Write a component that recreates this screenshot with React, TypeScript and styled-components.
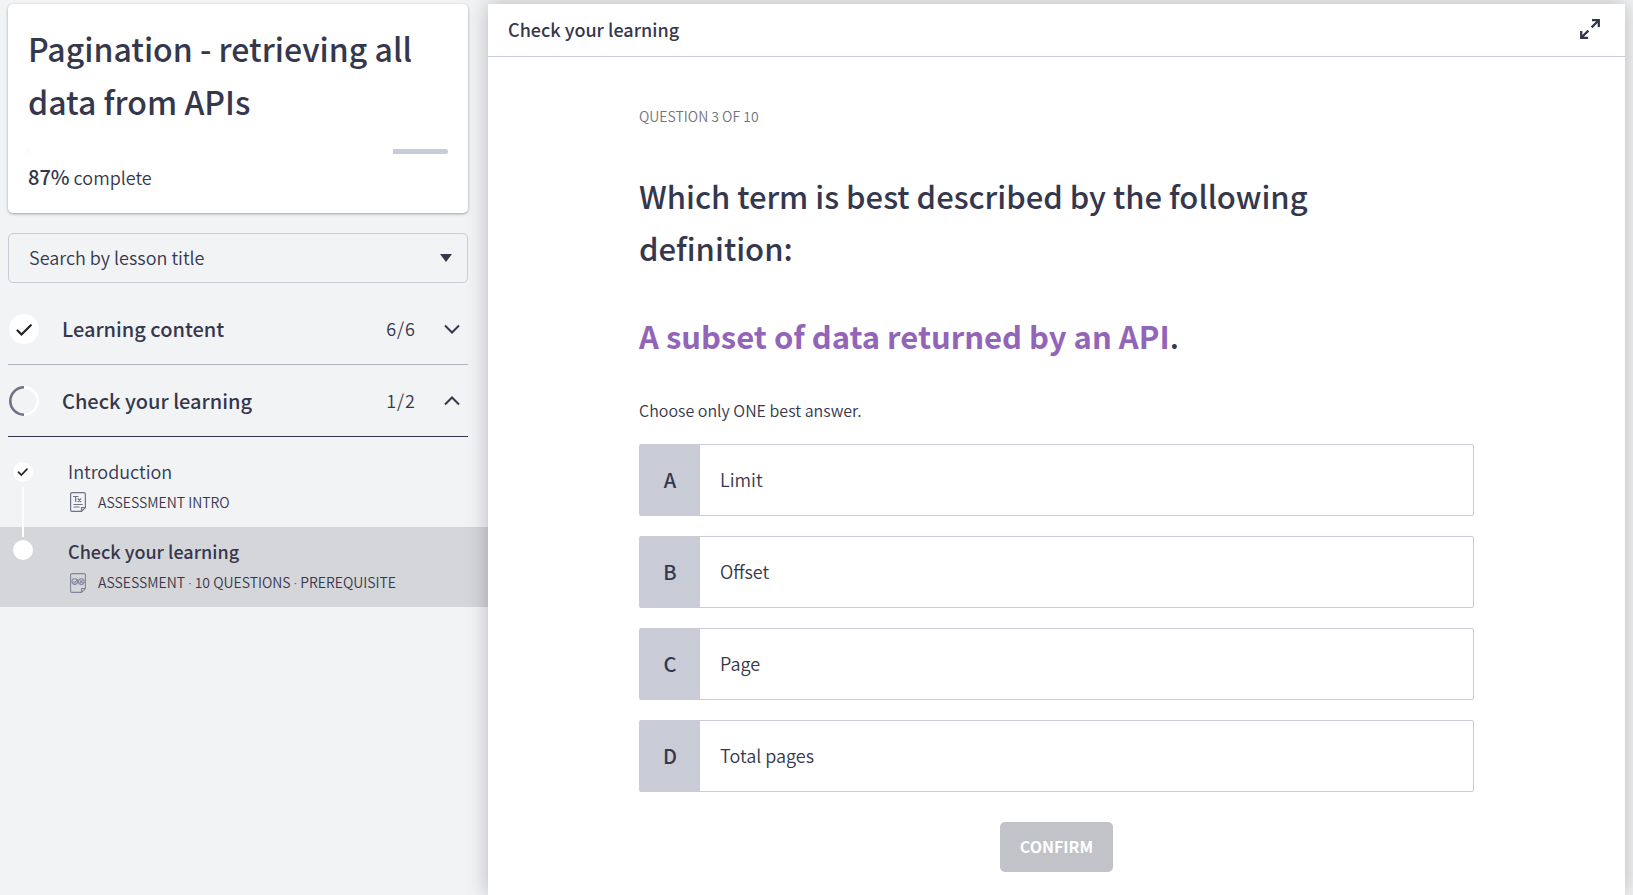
import React, { useState } from 'react';
import styled, { createGlobalStyle } from 'styled-components';

const ink = '#35374d';
const line = '#c9ccd6';

const GlobalStyle = createGlobalStyle`
  *, *::before, *::after { box-sizing: border-box; }
  body {
    margin: 0;
    background: #f2f3f5;
    color: ${ink};
    font-family: "Noto Sans CJK SC", "Noto Sans", sans-serif;
    font-size: 18px;
    line-height: 28px;
  }
  h1, h2, h3, p, ul { margin: 0; padding: 0; }
  ul { list-style: none; }
  button, select { font: inherit; color: inherit; }
`;

const Page = styled.div`
  display: flex;
  min-height: 100vh;
  overflow: hidden;
`;

const Sidebar = styled.aside`
  flex: 0 0 488px;
  padding-top: 4px;
`;

const SidebarInner = styled.div`
  padding: 0 20px 0 8px;
`;

const CourseCard = styled.section`
  padding: 18px 20px 22px;
  background: #fff;
  border-radius: 5px;
  box-shadow: 0 1px 3px rgba(0, 0, 0, 0.35);
`;

const CourseTitle = styled.h1`
  font-size: 32px;
  font-weight: 500;
  line-height: 53px;
`;

const ProgressTrack = styled.div`
  height: 5px;
  margin: 21px 0 9px;
  border-radius: 3px;
  background: ${line};
  overflow: hidden;
`;

const ProgressFill = styled.div`
  height: 100%;
  background: #fff;
`;

const ProgressText = styled.p`
  font-weight: 350;
  strong {
    font-size: 20px;
    font-weight: 500;
  }
`;

const SearchBox = styled.div`
  position: relative;
  margin: 20px 0 10px;
  svg {
    position: absolute;
    top: 21px;
    right: 16px;
    pointer-events: none;
  }
`;

const SearchSelect = styled.select`
  appearance: none;
  display: block;
  width: 100%;
  height: 50px;
  padding: 0 44px 3px 20px;
  border: 1px solid ${line};
  border-radius: 5px;
  background: transparent;
  font-weight: 350;
`;

const SectionButton = styled.button<{ $open: boolean }>`
  display: flex;
  align-items: center;
  width: 100%;
  height: 72px;
  padding: 0 8px 0 0;
  border: 0;
  border-bottom: 1px solid ${(p) => (p.$open ? ink : '#b0b1c0')};
  background: none;
  text-align: left;
  cursor: pointer;
`;

const SectionTitle = styled.span`
  flex: 1;
  margin-left: 22px;
  font-size: 20px;
  font-weight: 500;
`;

const SectionCount = styled.span`
  padding: 0 28px 2px 0;
  font-weight: 350;
  letter-spacing: 1px;
`;

const LessonList = styled.ul`
  padding-top: 10px;
`;

const Lesson = styled.li<{ $current?: boolean }>`
  display: flex;
  height: 80px;
  padding-left: 13px;
  background: ${(p) => (p.$current ? '#d5d6da' : 'transparent')};
`;

const Rail = styled.div<{ $gap: number }>`
  display: flex;
  flex-direction: column;
  align-items: center;
  gap: ${(p) => p.$gap}px;
  width: 20px;
`;

const RailDot = styled.span`
  display: flex;
  flex: none;
  align-items: center;
  justify-content: center;
  width: 20px;
  height: 20px;
  border-radius: 50%;
  background: #fff;
`;

const RailLine = styled.span<{ $length?: number; $hidden?: boolean }>`
  flex: ${(p) => (p.$length ? `0 0 ${p.$length}px` : '1')};
  width: 2px;
  background: ${(p) => (p.$hidden ? 'transparent' : '#fff')};
`;

const LessonLink = styled.a`
  display: block;
  flex: 1;
  padding: 10px 0 0 35px;
  color: inherit;
  text-decoration: none;
`;

const LessonTitle = styled.span<{ $current?: boolean }>`
  display: block;
  font-weight: ${(p) => (p.$current ? 500 : 350)};
`;

const LessonMeta = styled.span`
  display: flex;
  align-items: center;
  gap: 12px;
  margin-top: 5px;
  padding-left: 2px;
  font-size: 14px;
  font-weight: 350;
  line-height: 24px;
`;

const Dot = styled.span`
  font-family: "Open Sans", sans-serif;
`;

const Main = styled.main`
  flex: 1;
  min-width: 0;
  margin: 4px 8px 0 0;
  padding-bottom: 23px;
  background: #fff;
  box-shadow: 0 0 20px rgba(0, 0, 0, 0.25);
`;

const TopBar = styled.header`
  display: flex;
  align-items: center;
  justify-content: space-between;
  height: 53px;
  padding: 0 20px 3px;
  border-bottom: 1px solid ${line};
`;

const TopTitle = styled.h2`
  font-size: 18px;
  font-weight: 500;
`;

const IconButton = styled.button`
  display: flex;
  padding: 5px;
  border: 0;
  background: none;
  cursor: pointer;
`;

const Quiz = styled.form`
  display: flex;
  flex-direction: column;
  max-width: 835px;
  margin: 0 auto;
  padding-top: 49px;
`;

const QuestionNumber = styled.p`
  margin-bottom: 44px;
  color: #72747f;
  font-size: 14px;
  font-weight: 350;
  line-height: 20px;
`;

const Question = styled.h3`
  margin-bottom: 36px;
  padding-right: 20px;
  font-size: 31px;
  font-weight: 500;
  line-height: 52px;
`;

const Definition = styled.strong`
  color: #9265b8;
  font-weight: 700;
`;

const Hint = styled.p`
  margin-bottom: 22px;
  font-size: 16px;
  font-weight: 350;
  line-height: 24px;
`;

const Answers = styled.div`
  display: flex;
  flex-direction: column;
  gap: 20px;
`;

const Answer = styled.label`
  position: relative;
  display: flex;
  align-items: stretch;
  min-height: 72px;
  border: 1px solid ${line};
  border-radius: 2px;
  cursor: pointer;
  &:focus-within { outline: 2px solid ${ink}; }
  input {
    position: absolute;
    opacity: 0;
    margin: 0;
  }
`;

const AnswerLetter = styled.span`
  display: flex;
  align-items: center;
  justify-content: center;
  width: 60px;
  background: ${line};
  font-size: 20px;
  font-weight: 500;
`;

const AnswerText = styled.span`
  align-self: center;
  padding: 0 20px 2px;
  font-weight: 350;
`;

const ConfirmButton = styled.button`
  align-self: center;
  height: 50px;
  margin-top: 30px;
  padding: 0 20px 2px;
  border: 0;
  border-radius: 5px;
  background: #c2c3c8;
  color: #fff;
  font-size: 16px;
  font-weight: 700;
`;

const CheckDisc = () => (
  <svg width="32" height="32" viewBox="0 0 32 32" aria-hidden="true">
    <circle cx="16" cy="16" r="15" fill="#fff" />
    <path d="M9.5 17.5 13.5 21.5 22.8 12.2" fill="none" stroke="#222" strokeWidth="2.2" strokeLinecap="round" />
  </svg>
);

const HalfRing = () => (
  <svg width="32" height="32" viewBox="0 0 32 32" fill="none" aria-hidden="true">
    <path d="M16 2.3a13.7 13.7 0 0 1 0 27.4" stroke="#fff" strokeWidth="2.6" />
    <path d="M16 2.3a13.7 13.7 0 0 0 0 27.4" stroke="#6f7187" strokeWidth="2.6" />
  </svg>
);

const Chevron = ({ up }: { up?: boolean }) => (
  <svg width="16" height="16" viewBox="0 0 16 16" fill="none" stroke={ink} strokeWidth="2" aria-hidden="true">
    <path d={up ? 'M1 11.5 8 4.5 15 11.5' : 'M1 4.5 8 11.5 15 4.5'} />
  </svg>
);

const TextPageIcon = () => (
  <svg width="16" height="20" viewBox="0 0 16 20" fill="none" stroke="#71738a" strokeWidth="1.2" aria-hidden="true">
    <path d="M15.4 15.5V2A1.4 1.4 0 0 0 14 .6H2A1.4 1.4 0 0 0 .6 2v16A1.4 1.4 0 0 0 2 19.4h9.5zM11.5 19.4v-3.9h3.9" />
    <path d="M3 4.5h5.4M5.7 4.5V10M7.8 6.4l3.2 3.6M11 6.4 7.8 10M3.5 12.5h9.2M3.5 15h6" />
  </svg>
);

const QuizPageIcon = () => (
  <svg width="16" height="20" viewBox="0 0 16 20" fill="none" stroke="#83859a" strokeWidth="1.1" aria-hidden="true">
    <path d="M15.4 15.5V2A1.4 1.4 0 0 0 14 .6H2A1.4 1.4 0 0 0 .6 2v16A1.4 1.4 0 0 0 2 19.4h9.5zM11.5 19.4v-3.9h3.9" />
    <circle cx="4.7" cy="8.6" r="2.8" />
    <circle cx="11.3" cy="8.6" r="2.8" />
    <path d="m3.2 8.4 1.4 1.4 3.2-3.4M10 7.3l2.6 2.6M12.6 7.3 10 9.9" />
  </svg>
);

const ExpandIcon = () => (
  <svg width="20" height="20" viewBox="0 0 20 20" fill="none" stroke={ink} strokeWidth="2.3" aria-hidden="true">
    <path d="M12 1.2h6.8V8M18.8 1.2l-7.2 7.2M8 18.8H1.2V12M1.2 18.8l7.2-7.2" />
  </svg>
);

const answers = [
  ['A', 'Limit'],
  ['B', 'Offset'],
  ['C', 'Page'],
  ['D', 'Total pages'],
];

const progress = 87;

export default function App() {
  const [choice, setChoice] = useState('');
  return (
    <>
      <GlobalStyle />
      <Page>
        <Sidebar>
          <SidebarInner>
            <CourseCard>
              <CourseTitle>Pagination - retrieving all data from APIs</CourseTitle>
              <ProgressTrack role="progressbar" aria-valuenow={progress} aria-label="Course progress">
                <ProgressFill style={{ width: `${progress}%` }} />
              </ProgressTrack>
              <ProgressText><strong>{progress}%</strong> complete</ProgressText>
            </CourseCard>
            <SearchBox>
              <SearchSelect aria-label="Search by lesson title">
                <option>Search by lesson title</option>
              </SearchSelect>
              <svg width="12" height="8" viewBox="0 0 12 8" aria-hidden="true">
                <path d="M0 0h12L6 8z" fill={ink} />
              </svg>
            </SearchBox>
            <SectionButton $open={false} aria-expanded={false}>
              <CheckDisc />
              <SectionTitle>Learning content</SectionTitle>
              <SectionCount>6/6</SectionCount>
              <Chevron />
            </SectionButton>
            <SectionButton $open aria-expanded>
              <HalfRing />
              <SectionTitle>Check your learning</SectionTitle>
              <SectionCount>1/2</SectionCount>
              <Chevron up />
            </SectionButton>
          </SidebarInner>
          <LessonList>
            <Lesson>
              <Rail $gap={5}>
                <RailLine $length={10} $hidden />
                <RailDot>
                  <svg width="12" height="10" viewBox="0 0 12 10" fill="none" aria-hidden="true">
                    <path d="M1.5 5.2 4.3 8 10 2.2" stroke="#222" strokeWidth="1.7" strokeLinecap="round" />
                  </svg>
                </RailDot>
                <RailLine />
              </Rail>
              <LessonLink href="#introduction">
                <LessonTitle>Introduction</LessonTitle>
                <LessonMeta><TextPageIcon />ASSESSMENT INTRO</LessonMeta>
              </LessonLink>
            </Lesson>
            <Lesson $current>
              <Rail $gap={3}>
                <RailLine $length={10} />
                <RailDot />
              </Rail>
              <LessonLink href="#check" aria-current="page">
                <LessonTitle $current>Check your learning</LessonTitle>
                <LessonMeta>
                  <QuizPageIcon />
                  <span>ASSESSMENT <Dot>·</Dot> 10 QUESTIONS <Dot>·</Dot> PREREQUISITE</span>
                </LessonMeta>
              </LessonLink>
            </Lesson>
          </LessonList>
        </Sidebar>
        <Main>
          <TopBar>
            <TopTitle>Check your learning</TopTitle>
            <IconButton type="button" aria-label="Full screen"><ExpandIcon /></IconButton>
          </TopBar>
          <Quiz onSubmit={(e) => e.preventDefault()}>
            <QuestionNumber>QUESTION 3 OF 10</QuestionNumber>
            <Question>Which term is best described by the following definition:</Question>
            <Question as="p"><Definition>A subset of data returned by an API</Definition>.</Question>
            <Hint>Choose only ONE best answer.</Hint>
            <Answers role="radiogroup" aria-label="Answers">
              {answers.map(([letter, text]) => (
                <Answer key={letter}>
                  <input type="radio" name="answer" value={letter} checked={choice === letter} onChange={() => setChoice(letter)} />
                  <AnswerLetter>{letter}</AnswerLetter>
                  <AnswerText>{text}</AnswerText>
                </Answer>
              ))}
            </Answers>
            <ConfirmButton type="submit">CONFIRM</ConfirmButton>
          </Quiz>
        </Main>
      </Page>
    </>
  );
}
